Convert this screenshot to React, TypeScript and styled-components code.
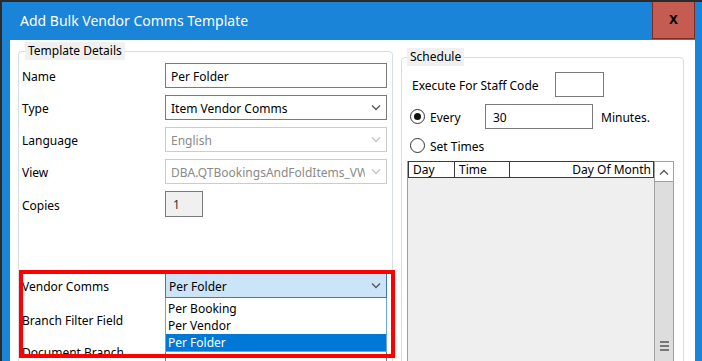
import React from 'react';
import styled, { createGlobalStyle } from 'styled-components';

const GlobalStyle = createGlobalStyle`
  html, body {
    margin: 0;
    padding: 0;
    background: #ffffff;
  }
  body {
    font-family: "Noto Sans", "Open Sans", sans-serif;
  }
`;

const Frame = styled.div`
  position: relative;
  width: 702px;
  height: 361px;
  box-sizing: border-box;
  border-top: 2px solid #2b2b2b;
  border-left: 2px solid #2b2b2b;
  background: #1a84d8;
  display: flex;
  flex-direction: column;
  overflow: hidden;
  font-family: "Noto Sans", "Open Sans", sans-serif;
  font-size: 12px;
  color: #000;
`;

const TitleBar = styled.div`
  height: 38px;
  flex: none;
  display: flex;
  align-items: flex-start;
  padding-left: 18px;
  color: #ffffff;
`;

const TitleText = styled.div`
  flex: 1;
  font-size: 14px;
  line-height: 38px;
`;

const CloseButton = styled.div`
  width: 43px;
  height: 37px;
  box-sizing: border-box;
  margin-right: 7px;
  background: #c45c51;
  border: 1px solid #7b2d25;
  border-top: none;
  display: flex;
  align-items: center;
  justify-content: center;
  font: bold 16px "Liberation Sans", sans-serif;
  color: #000;
  padding-bottom: 3px;
`;

const Client = styled.div`
  flex: 1;
  min-height: 0;
  margin: 0 7px 0 8px;
  background: #ffffff;
  display: flex;
  align-items: flex-start;
  overflow: hidden;
`;

const Group = styled.fieldset<{ $top: number; $left: number; $width: number; $pad: string }>`
  margin: ${p => p.$top}px 0 0 ${p => p.$left}px;
  width: ${p => p.$width}px;
  height: 360px;
  box-sizing: border-box;
  min-width: 0;
  padding: ${p => p.$pad};
  border: 1px solid #d5dfe5;
  border-radius: 4px;
  flex: none;
`;

const Legend = styled.legend<{ $offset: number }>`
  margin-left: ${p => p.$offset}px;
  padding: 0 3px;
  background: #f0f0f0;
  line-height: 18px;
  font-size: 12px;
`;

const Row = styled.div<{ $mt: number; $h?: number }>`
  position: relative;
  display: grid;
  grid-template-columns: 143px 222px;
  align-items: center;
  height: ${p => p.$h ?? 25}px;
  margin-top: ${p => p.$mt}px;
`;

const Label = styled.span`
  padding-top: 2px;
  white-space: nowrap;
`;

const Control = styled.div<{ $disabled?: boolean; $active?: boolean }>`
  height: 100%;
  box-sizing: border-box;
  display: flex;
  align-items: center;
  gap: 6px;
  padding: 1px 5px 0 ${p => (p.$active ? 3 : 5)}px;
  border: 1px solid ${p => (p.$active ? '#3d7ab3' : p.$disabled ? '#cccccc' : '#7a7a7a')};
  background: ${p => (p.$active ? '#cce4f7' : '#ffffff')};
  color: ${p => (p.$disabled ? '#8a8a8a' : '#000')};
`;

const ControlText = styled.span`
  flex: 1;
  min-width: 0;
  overflow: hidden;
  white-space: nowrap;
`;

const SmallBox = styled.div`
  width: 38px;
  height: 26px;
  box-sizing: border-box;
  border: 1px solid #7a7a7a;
  background: #f0f0f0;
  color: #333;
  padding: 1px 0 0 7px;
  display: flex;
  align-items: center;
`;

const DropList = styled.div`
  position: absolute;
  top: 25px;
  left: 143px;
  width: 222px;
  height: 54px;
  box-sizing: border-box;
  padding-top: 2px;
  border: 1px solid #6aa6dc;
  border-top: none;
  background: #ffffff;
  display: flex;
  flex-direction: column;
  z-index: 2;
`;

const DropItem = styled.div<{ $selected?: boolean }>`
  height: 17px;
  flex: none;
  line-height: 18px;
  padding-left: 2px;
  background: ${p => (p.$selected ? '#0078d7' : 'transparent')};
  color: ${p => (p.$selected ? '#ffffff' : '#000')};
`;

const Highlight = styled.div`
  position: absolute;
  left: 17px;
  top: 268px;
  width: 376px;
  height: 88px;
  box-sizing: border-box;
  border: 4px solid #ff0000;
  pointer-events: none;
  z-index: 1;
`;

const SchedRow = styled.div<{ $mt: number; $pl: number; $h?: number }>`
  display: flex;
  align-items: center;
  height: ${p => p.$h ?? 25}px;
  margin-top: ${p => p.$mt}px;
  padding-left: ${p => p.$pl}px;
`;

const FixedLabel = styled.span<{ $w: number }>`
  width: ${p => p.$w}px;
  flex: none;
  white-space: nowrap;
  padding-top: 1px;
`;

const Box = styled.div<{ $w: number }>`
  width: ${p => p.$w}px;
  height: 25px;
  box-sizing: border-box;
  border: 1px solid #7a7a7a;
  padding: 1px 0 0 7px;
  display: flex;
  align-items: center;
  flex: none;
`;

const Radio = styled.span<{ $checked?: boolean }>`
  width: 15px;
  height: 15px;
  box-sizing: border-box;
  border: 1px solid #333333;
  border-radius: 50%;
  flex: none;
  display: flex;
  align-items: center;
  justify-content: center;
  margin-right: 5px;

  &::after {
    content: '';
    width: 7px;
    height: 7px;
    border-radius: 50%;
    background: ${p => (p.$checked ? '#111111' : 'transparent')};
  }
`;

const MinutesText = styled.span`
  margin-left: 8px;
  padding-top: 1px;
`;

const Grid = styled.div`
  margin-top: 7px;
  width: 266px;
  height: 220px;
  display: flex;
`;

const GridMain = styled.div`
  flex: 1;
  display: flex;
  flex-direction: column;
  border-left: 1px solid #a0a0a0;
  background: #efefef;
`;

const HeaderRow = styled.div`
  display: flex;
  height: 17px;
  flex: none;
`;

const HeaderCell = styled.div<{ $w: number; $right?: boolean; $first?: boolean }>`
  width: ${p => p.$w}px;
  box-sizing: border-box;
  border: 1px solid #3a3a3a;
  border-left: ${p => (p.$first ? '1px solid #3a3a3a' : 'none')};
  background: #ffffff;
  padding: 0 2px 0 ${p => (p.$right ? 2 : 4)}px;
  line-height: 15px;
  text-align: ${p => (p.$right ? 'right' : 'left')};
  white-space: nowrap;
  overflow: hidden;
`;

const ScrollBar = styled.div`
  width: 20px;
  flex: none;
  display: flex;
  flex-direction: column;
  background: #dddddd;
  border-left: 1px solid #a0a0a0;
  border-right: 1px solid #a0a0a0;
  box-sizing: border-box;
`;

const ScrollButton = styled.div`
  height: 21px;
  flex: none;
  background: #ffffff;
  border-top: 1px solid #a0a0a0;
  border-bottom: 1px solid #a0a0a0;
  box-sizing: border-box;
  display: flex;
  align-items: center;
  justify-content: center;
`;

const Thumb = styled.div`
  height: 328px;
  flex: none;
  display: flex;
  flex-direction: column;
  align-items: center;
  justify-content: center;
  gap: 2px;
`;

const GripLine = styled.span`
  width: 9px;
  height: 2px;
  background: #777777;
`;

const Chevron = ({ disabled, up }: { disabled?: boolean; up?: boolean }) => (
  <svg width="10" height="6" viewBox="0 0 10 6" style={{ flex: 'none' }}>
    <polyline
      points={up ? '1,5.5 5,1.5 9,5.5' : '1,0.5 5,4.5 9,0.5'}
      fill="none"
      stroke={disabled ? '#c4c4c4' : '#555555'}
      strokeWidth="1.3"
    />
  </svg>
);

const App: React.FC = () => (
  <>
    <GlobalStyle />
    <Frame>
      <TitleBar>
        <TitleText>Add Bulk Vendor Comms Template</TitleText>
        <CloseButton>x</CloseButton>
      </TitleBar>
      <Client>
        <Group $top={2} $left={8} $width={375} $pad="3px 0 0 3px">
          <Legend $offset={3}>Template Details</Legend>
          <Row $mt={0}>
            <Label>Name</Label>
            <Control>
              <ControlText>Per Folder</ControlText>
            </Control>
          </Row>
          <Row $mt={7}>
            <Label>Type</Label>
            <Control>
              <ControlText>Item Vendor Comms</ControlText>
              <Chevron />
            </Control>
          </Row>
          <Row $mt={7}>
            <Label>Language</Label>
            <Control $disabled>
              <ControlText>English</ControlText>
              <Chevron disabled />
            </Control>
          </Row>
          <Row $mt={7}>
            <Label>View</Label>
            <Control $disabled>
              <ControlText>DBA.QTBookingsAndFoldItems_VW</ControlText>
              <Chevron disabled />
            </Control>
          </Row>
          <Row $mt={7} $h={26}>
            <Label>Copies</Label>
            <SmallBox>1</SmallBox>
          </Row>
          <Row $mt={56}>
            <Label>Vendor Comms</Label>
            <Control $active>
              <ControlText>Per Folder</ControlText>
              <Chevron />
            </Control>
            <DropList>
              <DropItem>Per Booking</DropItem>
              <DropItem>Per Vendor</DropItem>
              <DropItem $selected>Per Folder</DropItem>
            </DropList>
          </Row>
          <Row $mt={9}>
            <Label>Branch Filter Field</Label>
            <Control>
              <ControlText />
            </Control>
          </Row>
          <Row $mt={7}>
            <Label>Document Branch</Label>
            <Control>
              <ControlText />
            </Control>
          </Row>
        </Group>
        <Group $top={8} $left={8} $width={283} $pad="6px 0 0 5px">
          <Legend $offset={0}>Schedule</Legend>
          <SchedRow $mt={0} $pl={5}>
            <FixedLabel $w={143}>Execute For Staff Code</FixedLabel>
            <Box $w={49} />
          </SchedRow>
          <SchedRow $mt={7} $pl={3}>
            <Radio $checked />
            <FixedLabel $w={55}>Every</FixedLabel>
            <Box $w={108}>30</Box>
            <MinutesText>Minutes.</MinutesText>
          </SchedRow>
          <SchedRow $mt={8} $pl={3} $h={17}>
            <Radio />
            <FixedLabel $w={80}>Set Times</FixedLabel>
          </SchedRow>
          <Grid>
            <GridMain>
              <HeaderRow>
                <HeaderCell $w={47} $first>Day</HeaderCell>
                <HeaderCell $w={55}>Time</HeaderCell>
                <HeaderCell $w={144} $right>Day Of Month</HeaderCell>
              </HeaderRow>
            </GridMain>
            <ScrollBar>
              <ScrollButton>
                <Chevron up />
              </ScrollButton>
              <Thumb>
                <GripLine />
                <GripLine />
                <GripLine />
              </Thumb>
            </ScrollBar>
          </Grid>
        </Group>
      </Client>
      <Highlight />
    </Frame>
  </>
);

export default App;
